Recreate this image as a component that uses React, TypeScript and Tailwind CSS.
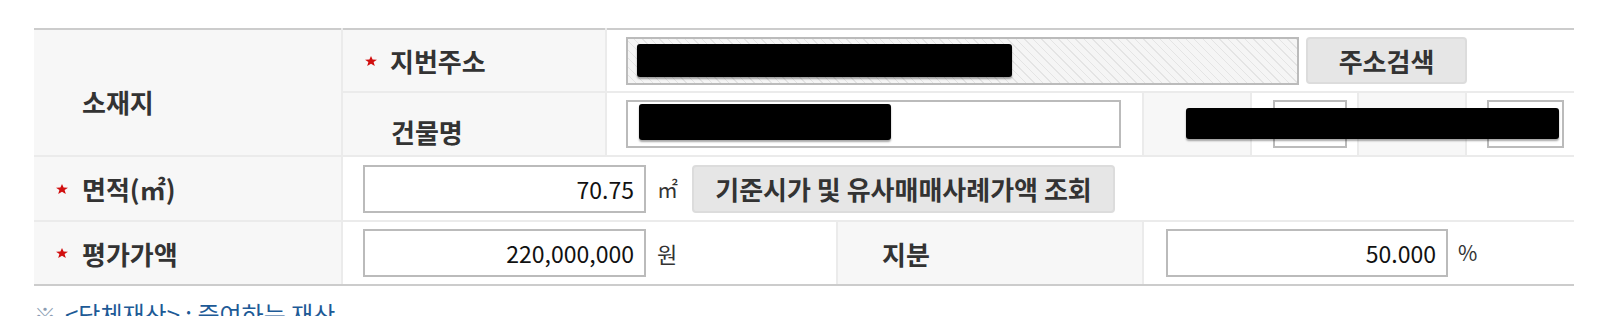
import React from "react"

function Star() {
  return (
    <svg width="12" height="10" viewBox="0 0 12 10" className="shrink-0">
      <polygon points="6,0 7.6,3.4 12,3.7 8.6,6.1 9.8,10 6,7.7 2.2,10 3.4,6.1 0,3.7 4.4,3.4" fill="#d10f0f" />
    </svg>
  )
}

function Redacted({ className }: { className: string }) {
  return <span className={"block bg-black rounded-[3px] shadow-[0_2px_2px_rgba(0,0,0,0.35)] " + className} />
}

const cell = "p-0 border-2 border-[#ebebeb] align-middle"
const label = cell + " bg-[#f7f7f7] text-left font-bold text-[26px] text-[#333333]"
const field =
  "h-[48px] border-2 border-[#bbbbbb] bg-white text-right pr-[10px] text-[23px] text-[#111111] outline-none font-['Noto_Sans_CJK_KR',sans-serif]"

export default function App() {
  return (
    <div className="relative w-[1610px] h-[316px] overflow-hidden bg-white pl-[34px] pt-[28px] font-['Noto_Sans_CJK_KR',sans-serif]">
      <table className="table-fixed border-collapse w-[1540px]">
        <colgroup>
          <col className="w-[308px]" />
          <col className="w-[264px]" />
          <col className="w-[231px]" />
          <col className="w-[306px]" />
          <col className="w-[108px]" />
          <col className="w-[107px]" />
          <col className="w-[108px]" />
          <col className="w-[108px]" />
        </colgroup>
        <tbody>
          {/* 소재지 */}
          <tr>
            <th rowSpan={2} className={label + " border-l-0 border-t-[#cccccc]"}>
              <div className="pl-[48px] pt-[18px]">소재지</div>
            </th>
            <th className={label + " h-[63px] border-t-[#cccccc]"}>
              <div className="flex items-center gap-[13px] pl-[22px]">
                <Star />
                <span>지번주소</span>
              </div>
            </th>
            <td colSpan={6} className={cell + " border-r-0 border-t-[#cccccc]"}>
              <div className="flex items-center gap-[7px] pl-[19px]">
                <div className="w-[673px] h-[48px] border-2 border-[#bbbbbb] bg-[repeating-linear-gradient(45deg,#f5f5f5_0px,#f5f5f5_5px,#e4e4e4_5px,#e4e4e4_6px)] pl-[9px] pt-[5px]">
                  <Redacted className="w-[375px] h-[33px]" />
                </div>
                <button className="w-[161px] h-[47px] rounded-[4px] border-2 border-[#dcdcdc] bg-[#e6e6e6] font-bold text-[26px] text-[#333333]">
                  주소검색
                </button>
              </div>
            </td>
          </tr>
          <tr>
            <th className={label + " h-[64px]"}>
              <div className="pl-[48px] pt-[14px]">건물명</div>
            </th>
            <td colSpan={2} className={cell}>
              <div className="pl-[19px]">
                <div className="w-[495px] h-[48px] border-2 border-[#bbbbbb] bg-white pl-[11px] pt-[2px]">
                  <Redacted className="w-[252px] h-[36px]" />
                </div>
              </div>
            </td>
            <th className={label} />
            <td className={cell}>
              <div className="pl-[21px]">
                <div className="w-[74px] h-[48px] border-2 border-[#bbbbbb] bg-white" />
              </div>
            </td>
            <th className={label} />
            <td className={cell + " border-r-0"}>
              <div className="pl-[20px]">
                <div className="w-[77px] h-[48px] border-2 border-[#bbbbbb] bg-white" />
              </div>
            </td>
          </tr>

          {/* 면적 */}
          <tr>
            <th className={label + " h-[65px] border-l-0"}>
              <div className="flex items-center gap-[14px] pl-[22px]">
                <Star />
                <span>면적(㎡)</span>
              </div>
            </th>
            <td colSpan={7} className={cell + " border-r-0"}>
              <div className="flex items-center pl-[20px]">
                <input readOnly value="70.75" className={field + " w-[283px]"} />
                <span className="ml-[11px] text-[21px] text-[#333333]">㎡</span>
                <button className="ml-[14px] w-[423px] h-[48px] rounded-[4px] border-2 border-[#dcdcdc] bg-[#e6e6e6] font-bold text-[26px] text-[#333333]">
                  기준시가 및 유사매매사례가액 조회
                </button>
              </div>
            </td>
          </tr>

          {/* 평가가액 */}
          <tr>
            <th className={label + " h-[64px] border-l-0 border-b-[#cccccc]"}>
              <div className="flex items-center gap-[14px] pl-[22px]">
                <Star />
                <span>평가가액</span>
              </div>
            </th>
            <td colSpan={2} className={cell + " border-b-[#cccccc]"}>
              <div className="flex items-center pl-[20px]">
                <input readOnly value="220,000,000" className={field + " w-[283px]"} />
                <span className="ml-[11px] text-[22px] text-[#333333]">원</span>
              </div>
            </td>
            <th className={label + " border-b-[#cccccc]"}>
              <div className="pl-[44px]">지분</div>
            </th>
            <td colSpan={4} className={cell + " border-r-0 border-b-[#cccccc]"}>
              <div className="flex items-center pl-[22px]">
                <input readOnly value="50.000" className={field + " w-[282px]"} />
                <span className="ml-[10px] text-[21px] text-[#333333]">%</span>
              </div>
            </td>
          </tr>
        </tbody>
      </table>

      <p className="mt-[16px] flex items-center gap-[9px] text-[24px] leading-none text-[#1d5a96]">
        <span className="text-[#8c9db3] text-[22px]">※</span>
        <span>&lt;단체재산&gt; : 증여하는 재산</span>
      </p>

      {/* 가려진 영역 */}
      <span className="absolute left-[1186px] top-[108px] w-[373px] h-[31px] bg-black rounded-[3px] shadow-[0_2px_2px_rgba(0,0,0,0.35)]" />
    </div>
  )
}
